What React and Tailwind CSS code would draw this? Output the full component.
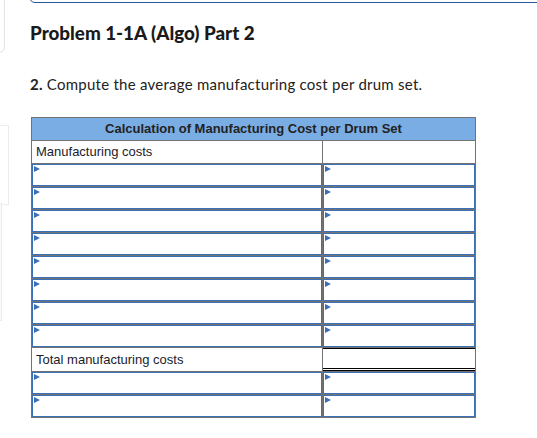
const inputRowsTop = 8;
const inputRowsBottom = 2;

function Marker() {
  return (
    <span className="absolute left-[1px] top-[1px] h-0 w-0 border-y-[3.5px] border-l-[6px] border-y-transparent border-l-[#3c70b6]" />
  );
}

function InputCell({ last }) {
  return (
    <div className={`relative h-full ${last ? "" : "border-r border-[#737373]"}`}>
      <div className="relative h-full border border-[#3c70b6] bg-white">
        <Marker />
      </div>
    </div>
  );
}

function InputRow() {
  return (
    <div className="grid h-[23px] grid-cols-[291px_1fr] border-t border-[#737373]">
      <InputCell />
      <InputCell last />
    </div>
  );
}

export default function App() {
  return (
    <div className="relative h-[438px] w-[537px] overflow-hidden bg-white font-['Liberation_Sans',Arial,sans-serif]">
      {/* bits of the surrounding page that peek in */}
      <div className="absolute left-[-12px] top-[-12px] h-[65px] w-[17px] rounded-br-md border border-[#e3e3e3]" />
      <div className="absolute left-[-12px] top-[125px] h-[80px] w-[21px] border border-[#ececec]" />
      <div className="absolute left-[-12px] top-[203px] h-[118px] w-[14px] border border-[#ececec] bg-[#fafafa]" />
      <div className="absolute left-[29px] right-[-12px] top-[-20px] h-[23px] rounded-md border border-[#2b5896]" />

      <div className="pl-[30px] pt-[21px]">
        <h2 className="font-['Lato',sans-serif] text-[18.8px] font-black leading-6 text-[#1a1a1a]">
          Problem 1-1A (Algo) Part 2
        </h2>
        <p className="mt-[29px] font-['Lato',sans-serif] text-[15px] leading-5 tracking-[0.25px] text-[#222]">
          <span className="font-bold">2.</span> Compute the average manufacturing cost per drum set.
        </p>
      </div>

      <div className="ml-[31px] mt-[23px] w-[445px] border border-[#737373] text-[13px] text-[#1b1b2b]">
        <div className="flex h-[22px] items-center justify-center bg-[#7aade4] font-bold text-[#222]">
          Calculation of Manufacturing Cost per Drum Set
        </div>
        <div className="grid h-[23px] grid-cols-[291px_1fr] border-t border-[#737373]">
          <div className="flex items-center border-r border-[#737373] pl-[4px]">Manufacturing costs</div>
          <div />
        </div>
        {Array.from({ length: inputRowsTop }).map((_, i) => (
          <InputRow key={i} />
        ))}
        <div className="grid h-[24px] grid-cols-[291px_1fr] border-t border-[#737373]">
          <div className="flex items-center border-r border-[#737373] pl-[4px]">Total manufacturing costs</div>
          <div className="border-b-[3px] border-t border-double border-b-black border-t-black" />
        </div>
        {Array.from({ length: inputRowsBottom }).map((_, i) => (
          <InputRow key={"b" + i} />
        ))}
      </div>
    </div>
  );
}
